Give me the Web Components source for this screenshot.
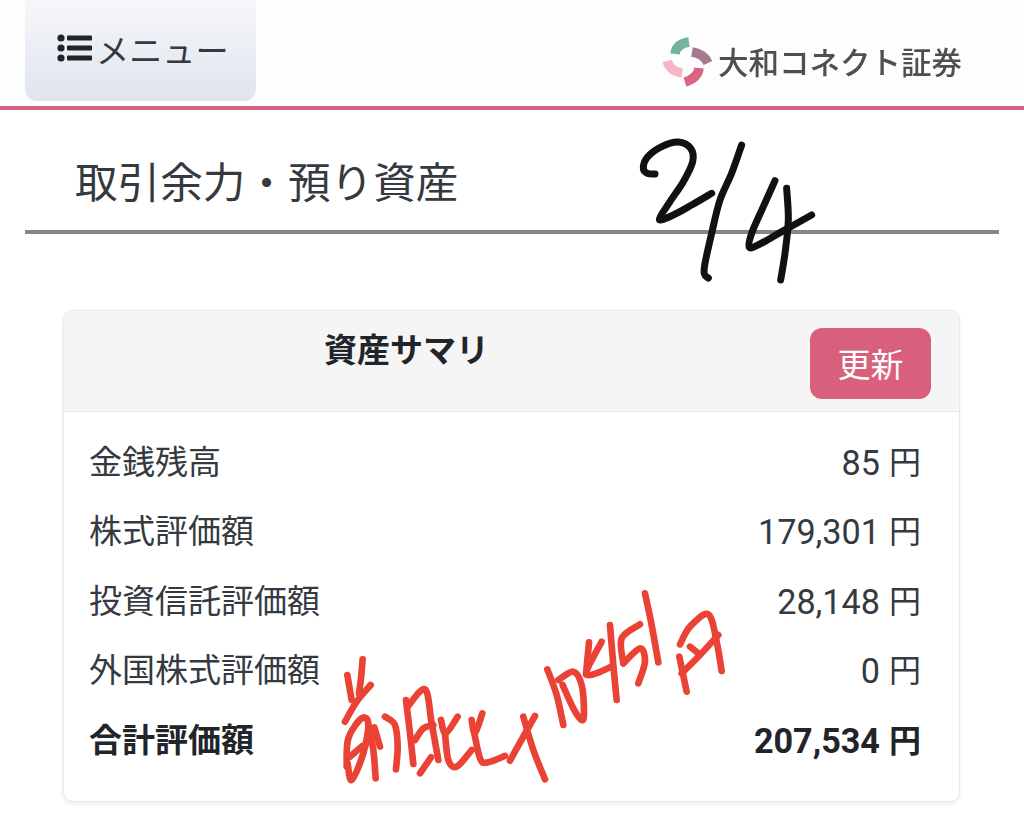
<!DOCTYPE html>
<html lang="ja">
<head>
<meta charset="utf-8">
<title>取引余力・預り資産</title>
<style>
  html, body { margin: 0; background: #fff; }
  body {
    position: relative;
    height: 818px;
    overflow: hidden;
    font-family: Roboto, "Noto Sans CJK JP", sans-serif;
    color: #212529;
  }
</style>
</head>
<body>
  <app-header></app-header>
  <page-title>取引余力・預り資産</page-title>
  <summary-card heading="資産サマリ" action="更新">
    <summary-row label="金銭残高" value="85"></summary-row>
    <summary-row label="株式評価額" value="179,301"></summary-row>
    <summary-row label="投資信託評価額" value="28,148"></summary-row>
    <summary-row label="外国株式評価額" value="0"></summary-row>
    <summary-row label="合計評価額" value="207,534" total></summary-row>
  </summary-card>
  <ink-overlay></ink-overlay>

<script>
  // ヘッダー: メニューボタン + ロゴ
  class AppHeader extends HTMLElement {
    constructor() {
      super();
      this.attachShadow({ mode: "open" });
      this.shadowRoot.innerHTML = `
        <style>
          :host {
            display: flex;
            justify-content: space-between;
            height: 106px;
            padding: 0 62px 0 25px;
            background: #fdfdfd;
            border-bottom: 4px solid #cf6480;
          }
          .menu {
            display: flex;
            align-items: center;
            gap: 3px;
            box-sizing: border-box;
            width: 231px;
            height: 101px;
            padding: 0 0 5px 32px;
            border-radius: 0 0 12px 12px;
            background: linear-gradient(#f6f7fa, #dfe4ee);
            font-size: 33.2px;
            color: #343a40;
          }
          .logo {
            display: flex;
            align-items: center;
            gap: 1px;
            margin-top: 26px;
            height: 72px;
            font-size: 30.5px;
            font-weight: 500;
            color: #4f4f4f;
            white-space: nowrap;
          }
          .logo svg { filter: blur(.7px); margin-top: 1px; }
          .logo span { filter: blur(.5px); padding-bottom: 2px; }
        </style>
        <div class="menu">
          <svg width="36" height="28" viewBox="0 0 36 28" fill="#212529">
            <circle cx="4" cy="4" r="3.6"/><circle cx="4" cy="14" r="3.6"/><circle cx="4" cy="24" r="3.6"/>
            <rect x="10" y="1.5" width="25" height="5" rx="1"/>
            <rect x="10" y="11.5" width="25" height="5" rx="1"/>
            <rect x="10" y="21.5" width="25" height="5" rx="1"/>
          </svg>
          <span>メニュー</span>
        </div>
        <div class="logo">
          <svg width="62" height="65" viewBox="0 0 62 65" fill="none" stroke-width="9.5">
            <path d="M20 24 Q21 14 34 12" stroke="#74b49a"/>
            <path d="M37 22 Q49 24 53 33" stroke="#a57a90"/>
            <path d="M44 38 Q43 48 30 52" stroke="#d9667e"/>
            <path d="M12 31 Q15 41 27 43" stroke="#f2b7c0"/>
          </svg>
          <span>大和コネクト証券</span>
        </div>
      `;
    }
  }

  class PageTitle extends HTMLElement {
    constructor() {
      super();
      this.attachShadow({ mode: "open" });
      this.shadowRoot.innerHTML = `
        <style>
          :host {
            display: block;
            box-sizing: border-box;
            height: 124px;
            margin: 0 25px;
            padding: 42px 0 0 50px;
            border-bottom: 4px solid #868686;
            font-size: 42.6px;
            line-height: 62px;
            color: #343a40;
          }
        </style>
        <slot></slot>
      `;
    }
  }

  // カード本体。行は slot で受け取る
  class SummaryCard extends HTMLElement {
    constructor() {
      super();
      this.attachShadow({ mode: "open" });
      this.shadowRoot.innerHTML = `
        <style>
          :host {
            display: block;
            box-sizing: border-box;
            width: 897px;
            height: 492px;
            margin: 76px 0 0 63px;
            border: 1px solid #e6e8ea;
            border-radius: 10px;
            box-shadow: 0 2px 4px rgba(0,0,0,.08);
            background: #fff;
            overflow: hidden;
          }
          header {
            display: flex;
            justify-content: flex-end;
            box-sizing: border-box;
            height: 101px;
            padding: 17px 28px 0 0;
            background: #f5f5f5;
            border-bottom: 1px solid #e8e8e8;
          }
          h2 {
            flex: 1;
            margin: 0;
            padding: 1px 0 0 260px;
            font-size: 33px;
            line-height: 43px;
            font-weight: 700;
            color: #212529;
          }
          button {
            width: 121px;
            height: 71px;
            padding: 0 0 2px;
            border: 0;
            border-radius: 12px;
            background: #d9607c;
            color: #fff;
            font: inherit;
            font-size: 33px;
          }
          .rows {
            display: flex;
            flex-direction: column;
            padding: 16px 38px 0 25px;
          }
        </style>
        <header>
          <h2></h2>
          <button type="button"></button>
        </header>
        <div class="rows"><slot></slot></div>
      `;
    }
    connectedCallback() {
      this.shadowRoot.querySelector("h2").textContent = this.getAttribute("heading");
      this.shadowRoot.querySelector("button").textContent = this.getAttribute("action");
    }
  }

  class SummaryRow extends HTMLElement {
    constructor() {
      super();
      this.attachShadow({ mode: "open" });
      this.shadowRoot.innerHTML = `
        <style>
          :host {
            display: flex;
            justify-content: space-between;
            align-items: center;
            height: 69.5px;
            font-size: 33px;
            line-height: 46px;
            color: #343a40;
          }
          :host([total]) { font-weight: 700; color: #212529; }
          .value { display: flex; align-items: center; gap: 9px; }
          .num { font-size: 34.2px; }
          .unit { font-size: 32px; }
        </style>
        <span class="label"></span>
        <span class="value"><span class="num"></span><span class="unit">円</span></span>
      `;
    }
    connectedCallback() {
      this.shadowRoot.querySelector(".label").textContent = this.getAttribute("label");
      this.shadowRoot.querySelector(".num").textContent = this.getAttribute("value");
    }
  }

  // 点列をなめらかな線にする (Catmull-Rom)
  function smooth(str) {
    const p = str.split(" ").map(s => s.split(",").map(Number));
    let d = `M${p[0][0]} ${p[0][1]}`;
    for (let i = 0; i < p.length - 1; i++) {
      const a = p[i - 1] || p[i], b = p[i], c = p[i + 1], e = p[i + 2] || c;
      d += ` C${b[0] + (c[0] - a[0]) / 6} ${b[1] + (c[1] - a[1]) / 6} ${c[0] - (e[0] - b[0]) / 6} ${c[1] - (e[1] - b[1]) / 6} ${c[0]} ${c[1]}`;
    }
    return `<path d="${d}"/>`;
  }

  // 画面の上に手書きされたメモ (フリーハンドの線)。座標は 3 倍の値
  class InkOverlay extends HTMLElement {
    constructor() {
      super();
      this.attachShadow({ mode: "open" });
      const black = [
        "105,162 82,160 70,145 82,112 125,80 175,66 212,85 218,125 190,185 150,245 118,298 160,285 215,255 275,220",
        "365,75 335,160 300,240 275,340 255,430 253,462 265,474",
        "465,182 430,260 395,340 388,382 420,372 480,338 575,285",
        "500,205 505,300 495,400 482,480",
      ];
      const redLeft = [
        "37,75 50,150",
        "83,28 78,85 72,130",
        "107,105 65,155 30,215",
        "35,350 40,265 80,205 100,222 85,310 50,390 38,340",
        "45,320 82,288",
        "118,232 135,290",
        "100,225 115,300 122,385",
        "150,200 180,225 188,290 183,358",
        "213,150 225,250 235,342",
        "218,170 270,118 290,220 310,330",
        "240,270 265,235 295,225",
        "255,370 288,322",
        "318,210 332,250 368,200",
        "330,250 340,330 365,350 410,300",
        "410,210 420,250 442,190",
        "418,250 435,325 455,338 510,318",
        "600,198 565,260 525,332",
        "565,200 595,300 630,388",
      ];
      const redRight = [
        "22,253 50,330 70,420",
        "55,285 100,260 125,300 132,385 125,405 100,370 68,300",
        "147,172 138,268",
        "185,170 140,268 215,245",
        "210,120 220,240 230,345",
        "300,118 245,160 250,235",
        "250,235 300,190 315,230 295,295",
        "315,25 335,120 355,232",
        "420,178 450,125 505,88 530,170 545,258",
        "418,215 440,320",
        "425,265 480,210 535,150",
        "450,185 475,205",
      ];
      this.shadowRoot.innerHTML = `
        <style>
          :host { position: absolute; inset: 0; pointer-events: none; }
          svg { display: block; }
          g { fill: none; stroke-linecap: round; stroke-linejoin: round; }
        </style>
        <svg width="1024" height="818" viewBox="0 0 1024 818">
          <g transform="translate(620 120) scale(.3333)" stroke="#111" stroke-width="21">${black.map(smooth).join("")}</g>
          <g transform="translate(335 650) scale(.3333)" stroke="#ea4335" stroke-width="20">${redLeft.map(smooth).join("")}</g>
          <g transform="translate(540 585) scale(.3333)" stroke="#ea4335" stroke-width="20">${redRight.map(smooth).join("")}</g>
        </svg>
      `;
    }
  }

  customElements.define("app-header", AppHeader);
  customElements.define("page-title", PageTitle);
  customElements.define("summary-card", SummaryCard);
  customElements.define("summary-row", SummaryRow);
  customElements.define("ink-overlay", InkOverlay);
</script>
</body>
</html>
